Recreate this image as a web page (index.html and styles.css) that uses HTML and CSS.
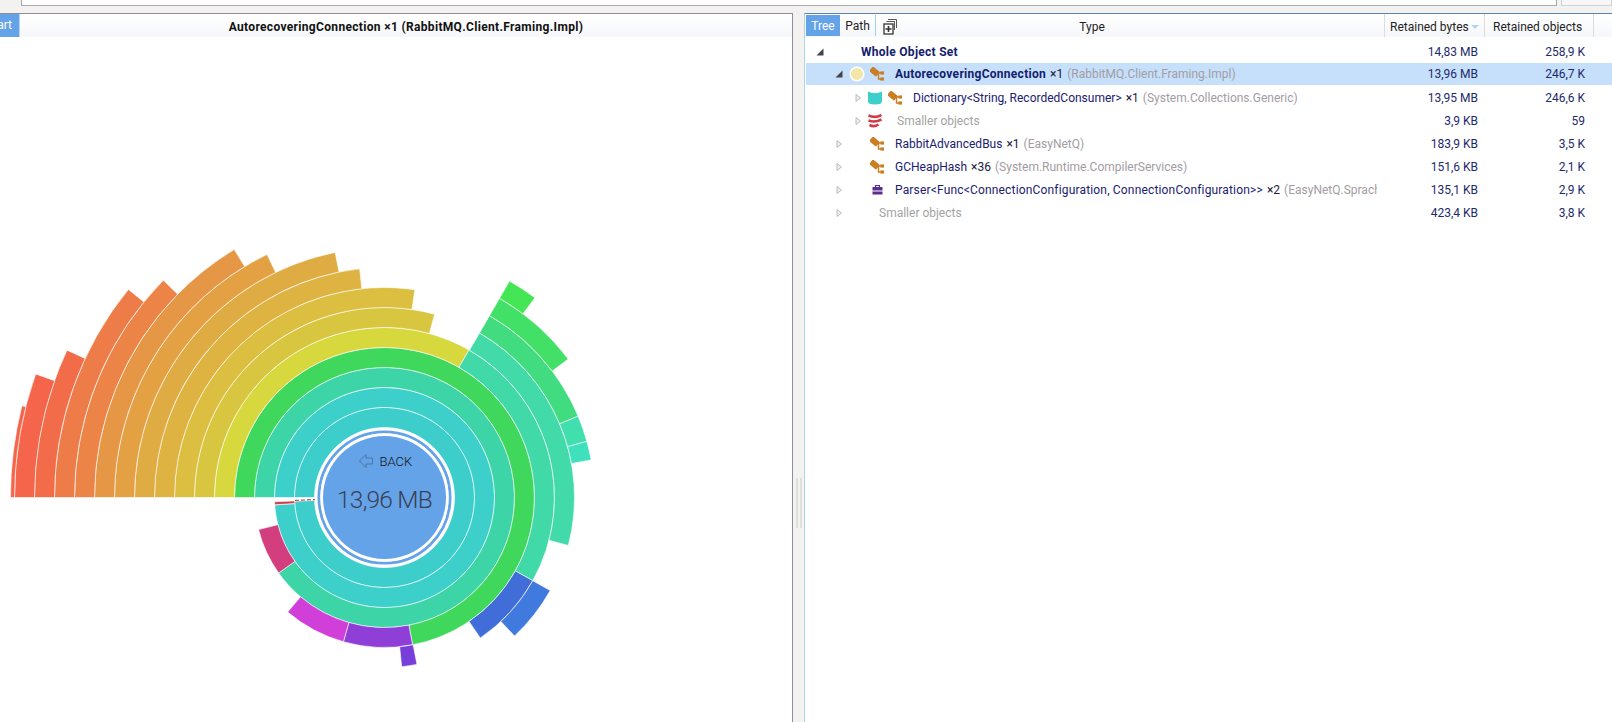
FILE: index.html
```
<!DOCTYPE html>
<html lang="en">
<head>
<meta charset="utf-8">
<title>Whole Object Set</title>
<link rel="stylesheet" href="styles.css">
</head>
<body>
<div class="topbar">
  <div class="search"></div>
  <div class="search-side"></div>
</div>
<div class="main">
  <section class="left">
    <header class="left-head">
      <div class="start"><span>Start</span></div>
      <div class="title">AutorecoveringConnection ×1 (RabbitMQ.Client.Framing.Impl)</div>
    </header>
    <svg id="sunburst" class="chart" viewBox="0 37 792 685" width="792" height="685">
      <g id="arcs"></g>
      <line class="dash" x1="295" y1="500.4" x2="315" y2="499.6"></line>
      <circle class="core-ring" cx="384.5" cy="497.5" r="68.2"></circle>
      <circle class="core-mid" cx="384.5" cy="497.5" r="65.5"></circle>
      <circle class="core-ring" cx="384.5" cy="497.5" r="62.7"></circle>
      <circle class="core" cx="384.5" cy="497.5" r="61.5"></circle>
      <path class="back-arrow" d="M359.5 461 L366 454.5 V458 H372.5 V464 H366 V467.5 Z"></path>
      <text class="back" x="379.5" y="465.5">BACK</text>
      <text class="size" x="384.5" y="508" text-anchor="middle">13,96 MB</text>
    </svg>
  </section>
  <div class="splitter"><div class="grip"></div></div>
  <section class="right">
    <header class="right-head">
      <div class="tab active">Tree</div>
      <div class="tab">Path</div>
      <div class="tool">
        <svg width="14" height="16" viewBox="0 0 14 16">
          <path class="i-stack" d="M5 .5H13.5V9M3.5 2.5H11.5V11M1.5 4.5"></path>
          <rect class="i-box" x="1" y="5" width="9" height="10"></rect>
          <path class="i-plus" d="M5.5 7V13M2.5 10H8.5"></path>
        </svg>
      </div>
      <div class="col-type">Type</div>
      <div class="col-bytes">Retained bytes<i class="sort"></i></div>
      <div class="col-objs">Retained objects</div>
    </header>
    <div class="rows">
      <div class="row lv0">
        <div class="tree">
          <svg class="exp" viewBox="0 0 12 12"><path class="open" d="M9.5 2.5V9.5H2.5Z"></path></svg>
          <span class="name root gap-35">Whole Object Set</span>
        </div>
        <div class="n1">14,83 MB</div><div class="n2">258,9 K</div>
      </div>
      <div class="row lv1 sel">
        <div class="tree">
          <svg class="exp" viewBox="0 0 12 12"><path class="open" d="M9.5 2.5V9.5H2.5Z"></path></svg>
          <svg class="mark" viewBox="0 0 16 16"><circle class="dot" cx="8" cy="8" r="6.8"></circle></svg>
          <svg class="ico gap-5" viewBox="0 0 14 14"><use href="#cls"></use></svg>
          <span class="name bold gap-11">AutorecoveringConnection</span><span class="cnt">×1</span><span class="ns">(RabbitMQ.Client.Framing.Impl)</span>
        </div>
        <div class="n1">13,96 MB</div><div class="n2">246,7 K</div>
      </div>
      <div class="row lv2">
        <div class="tree">
          <svg class="exp" viewBox="0 0 12 12"><path class="shut" d="M4 2.5L8.5 6L4 9.5Z"></path></svg>
          <svg class="ico gap-4" viewBox="0 0 14 14"><path class="cyl" d="M0 .5Q7 4 14 .5V10.5Q14 13.5 7 13.5Q0 13.5 0 10.5Z"></path></svg>
          <svg class="ico gap-6" viewBox="0 0 14 14"><use href="#cls"></use></svg>
          <span class="name gap-11">Dictionary&lt;String, RecordedConsumer&gt;</span><span class="cnt">×1</span><span class="ns">(System.Collections.Generic)</span>
        </div>
        <div class="n1">13,95 MB</div><div class="n2">246,6 K</div>
      </div>
      <div class="row lv2">
        <div class="tree">
          <svg class="exp" viewBox="0 0 12 12"><path class="shut" d="M4 2.5L8.5 6L4 9.5Z"></path></svg>
          <svg class="ico gap-4" viewBox="0 0 14 14"><path class="swoosh" d="M.5 1.5Q7 4.5 13.5 1M.5 6.5Q7 9 13.5 5.5M1.5 11Q6 13.5 10.5 10.5"></path></svg>
          <span class="name muted gap-15">Smaller objects</span>
        </div>
        <div class="n1">3,9 KB</div><div class="n2">59</div>
      </div>
      <div class="row lv1">
        <div class="tree">
          <svg class="exp" viewBox="0 0 12 12"><path class="shut" d="M4 2.5L8.5 6L4 9.5Z"></path></svg>
          <svg class="ico gap-25" viewBox="0 0 14 14"><use href="#cls"></use></svg>
          <span class="name gap-11">RabbitAdvancedBus</span><span class="cnt">×1</span><span class="ns">(EasyNetQ)</span>
        </div>
        <div class="n1">183,9 KB</div><div class="n2">3,5 K</div>
      </div>
      <div class="row lv1">
        <div class="tree">
          <svg class="exp" viewBox="0 0 12 12"><path class="shut" d="M4 2.5L8.5 6L4 9.5Z"></path></svg>
          <svg class="ico gap-25" viewBox="0 0 14 14"><use href="#cls"></use></svg>
          <span class="name gap-11">GCHeapHash</span><span class="cnt">×36</span><span class="ns">(System.Runtime.CompilerServices)</span>
        </div>
        <div class="n1">151,6 KB</div><div class="n2">2,1 K</div>
      </div>
      <div class="row lv1">
        <div class="tree">
          <svg class="exp" viewBox="0 0 12 12"><path class="shut" d="M4 2.5L8.5 6L4 9.5Z"></path></svg>
          <svg class="ico gap-25" viewBox="0 0 14 14"><path class="bag" fill-rule="evenodd" d="M5 2H10V4H12.5V7.5H2.5V4H5ZM6.2 3V4H8.8V3ZM2.5 8.5H12.5V11.5H2.5Z"></path></svg>
          <span class="name wide gap-11">Parser&lt;Func&lt;ConnectionConfiguration, ConnectionConfiguration&gt;&gt;</span><span class="cnt">×2</span><span class="ns">(EasyNetQ.Sprache)</span>
        </div>
        <div class="n1">135,1 KB</div><div class="n2">2,9 K</div>
      </div>
      <div class="row lv1">
        <div class="tree">
          <svg class="exp" viewBox="0 0 12 12"><path class="shut" d="M4 2.5L8.5 6L4 9.5Z"></path></svg>
          <span class="name muted gap-34">Smaller objects</span>
        </div>
        <div class="n1">423,4 KB</div><div class="n2">3,8 K</div>
      </div>
    </div>
  </section>
</div>
<svg class="defs" width="0" height="0">
  <defs>
    <g id="cls">
      <path class="cls-line" d="M6 6H11M8.5 6V12H12"></path>
      <rect class="cls-a" x="0" y="1.5" width="9" height="6" rx=".8" transform="rotate(40 4.5 4.5)"></rect>
      <rect class="cls-b" x="10.4" y="4.4" width="3.6" height="3.2"></rect>
      <rect class="cls-b" x="10.4" y="10.4" width="3.6" height="3.2"></rect>
    </g>
  </defs>
</svg>
<script src="sunburst.js"></script>
</body>
</html>
```
FILE: styles.css
```
* { box-sizing: border-box; }
html, body { margin: 0; height: 722px; overflow: hidden; background: #f3f2f1; }
body { font: 12px/16px Roboto, "Noto Sans", sans-serif; color: #1a1a1a; }

.topbar { height: 13px; display: flex; padding-left: 21px; background: #f3f2f1; }
.search { width: 1537px; height: 6px; background: #fff; border: 1px solid #a9a9ad; border-top: 0; }
.search-side { width: 51px; height: 6px; margin-left: 4px; background: #f7f7f7; border: 1px solid #d2d2d2; border-top: 0; }

.main { height: 709px; display: flex; }

.left { width: 793px; background: #fff; border-top: 1px solid #8d8f98; border-right: 1px solid #8d8f98; }
.left-head { height: 23px; display: flex; background: linear-gradient(#fff, #f6f7fa); }
.start { width: 20px; background: #65a3e8; border-right: 1px solid #b9d6f3; color: #fff; overflow: hidden; display: flex; justify-content: flex-end; line-height: 23px; padding-right: 7px; }
.title { flex: 1; text-align: center; font-weight: 700; letter-spacing: .33px; line-height: 26px; color: #111; white-space: nowrap; }
.chart { display: block; }

.arc { stroke: #fff; stroke-width: .6; }
.dash { stroke: #d13c47; stroke-width: 1.2; stroke-dasharray: 4 2; }
.core-ring { fill: none; stroke: #fff; stroke-width: 3; }
.core-mid { fill: none; stroke: #65a3e8; stroke-width: 3; }
.core { fill: #65a3e8; }
.back-arrow { fill: none; stroke: #4f74a8; stroke-width: 1; }
.back { font: 300 13px Roboto, sans-serif; fill: #101418; }
.size { font: 300 24.5px Roboto, sans-serif; letter-spacing: -.8px; fill: #3b4054; }

.splitter { width: 11px; padding: 464px 0 0 3px; background: #f3f2f1; }
.grip { width: 6px; height: 50px; border-left: 2px solid #dfdfdc; border-right: 2px solid #dfdfdc; margin-top: 1px; }

.right { flex: 1; min-width: 0; background: #fff; border-top: 1px solid #5a85a8; border-left: 1px solid #a8d8ee; }
.right-head { height: 23px; display: flex; align-items: stretch; background: linear-gradient(#fff, #f6f7fa); }
.tab { margin: 1px 0; padding-top: 3px; width: 35px; text-align: center; color: #222; }
.tab:first-child { margin-left: 1px; width: 34px; }
.tab.active { background: #65a3e8; color: #fff; }
.tool { width: 25px; padding: 4px 0 0 7px; border-left: 1px solid #a8cde8; margin: 1px 0; }
.tool svg { display: block; }
.i-stack { fill: none; stroke: #555; stroke-width: 1; }
.i-box { fill: #fff; stroke: #444; stroke-width: 1.4; }
.i-plus { fill: none; stroke: #333; stroke-width: 1.6; }
.col-type { flex: 1; text-align: center; padding: 5px 100px 0 0; color: #222; }
.col-bytes { width: 100px; padding: 5px 0 0 5px; border-left: 1px solid #dcdcdc; white-space: nowrap; display: flex; color: #222; }
.col-objs { width: 110px; padding: 5px 0 0 8px; border-left: 1px solid #dcdcdc; border-right: 1px solid #dcdcdc; margin-right: 18px; white-space: nowrap; color: #222; }
.sort { width: 0; height: 0; margin: 6px 0 0 2px; border: 4px solid transparent; border-top: 4px solid #b5d3ec; border-bottom: 0; }

.rows { padding-top: 3px; }
.row { height: 23px; display: flex; align-items: center; padding-right: 27px; line-height: 22px; color: #1c2a6b; }
.lv0 .tree { padding-left: 9px; }
.lv1 .tree { padding-left: 28px; }
.lv2 .tree { padding-left: 47px; }
.sel { background: #c6e0fb; background-clip: content-box; border-bottom: 1px solid #fff; margin-left: 1px; padding-right: 0; }
.sel .n2 { margin-right: 27px; }
.sel .tree { padding-left: 27px; }
.tree { flex: 1; min-width: 0; height: 22px; display: flex; align-items: center; overflow: hidden; white-space: nowrap; }
.n1 { width: 101px; text-align: right; }
.n2 { width: 107px; text-align: right; }

.exp { width: 12px; height: 12px; flex: none; }
.open { fill: #444; }
.shut { fill: #eee; stroke: #bdbdbd; stroke-width: 1; }
.mark { width: 16px; height: 16px; flex: none; margin-left: 4px; }
.dot { fill: #f2e6a8; stroke: #fff; stroke-width: 1.4; }
.ico { width: 14px; height: 14px; flex: none; }
.gap-4 { margin-left: 4px; }
.gap-5 { margin-left: 5px; }
.gap-6 { margin-left: 6px; }
.gap-25 { margin-left: 25px; }
.gap-11 { margin-left: 11px; }
.gap-15 { margin-left: 15px; }
.gap-34 { margin-left: 34px; }
.gap-35 { margin-left: 35px; }
.cyl { fill: #3dcfcb; }
.swoosh { fill: none; stroke: #d13c47; stroke-width: 2.6; }
.bag { fill: #5c2d91; }
.cls-line { fill: none; stroke: #cb7d22; stroke-width: 1.4; }
.cls-a { fill: #cb7d22; }
.cls-b { fill: #cb7d22; }

.name { color: #1a2070; }
.wide { letter-spacing: .17px; }
.root, .bold { font-weight: 700; letter-spacing: .28px; color: #14206e; }
.muted { color: #a3a3a3; }
.cnt { margin-left: 4px; color: #1a1a3a; }
.ns { margin-left: 4px; color: #a39ca3; }
.defs { position: absolute; }
```
FILE: sunburst.js
```
(function () {
  var cx = 384.5, cy = 497.5;
  // [inner radius, outer radius, start angle, end angle (clockwise from north), colour]
  var segs = [
    [70, 90, 270, 627.6, "#3dcecc"],
    [90, 110, 270, 626.1, "#3dd0ca"],
    [90, 110, 266.2, 267.8, "#d13c47"],
    [110, 130, 270, 594.5, "#3dd4a8"],
    [110, 130, 234.5, 255.7, "#d23e7e"],
    [130, 150, 270, 529.2, "#40d85c"],
    [130, 150, 169.2, 195.9, "#8f3fd8"],
    [130, 150, 195.9, 220.2, "#d03fd8"],
    [150, 170, 270, 389.8, "#d7d83e"],
    [150, 170, 29.8, 119.3, "#41d9a7"],
    [150, 170, 119.3, 145.7, "#406dd8"],
    [150, 170, 169, 174.2, "#773ed9"],
    [170, 190, 270, 375.3, "#d9c640"],
    [170, 190, 30, 104.6, "#41daa8"],
    [170, 190, 119.3, 136.8, "#417ade"],
    [190, 210, 270, 368.3, "#dcbe41"],
    [190, 210, 30, 67.2, "#41dc7f"],
    [190, 210, 67.2, 74.5, "#41dfae"],
    [190, 210, 74.5, 79.7, "#41e0bc"],
    [210, 230, 270, 353.8, "#dfb342"],
    [210, 230, 30, 53, "#43e068"],
    [230, 250, 270, 348.6, "#dfac43"],
    [230, 250, 30, 37, "#45e655"],
    [250, 270, 270, 334.2, "#e4a144"],
    [270, 290, 270, 328.8, "#e69745"],
    [290, 310, 270, 314.5, "#ec8447"],
    [310, 330, 270, 309.1, "#ee7c48"],
    [330, 350, 270, 294.9, "#f26c4a"],
    [350, 370, 270, 289.5, "#f4654b"],
    [370, 374, 270, 284.2, "#f4654b"]
  ];
  function pt(r, deg) {
    var a = deg * Math.PI / 180;
    return (cx + r * Math.sin(a)).toFixed(2) + " " + (cy - r * Math.cos(a)).toFixed(2);
  }
  var group = document.getElementById("arcs");
  segs.forEach(function (s) {
    var large = s[3] - s[2] > 180 ? 1 : 0;
    var d = "M" + pt(s[0], s[2]) +
      "L" + pt(s[1], s[2]) +
      "A" + s[1] + " " + s[1] + " 0 " + large + " 1 " + pt(s[1], s[3]) +
      "L" + pt(s[0], s[3]) +
      "A" + s[0] + " " + s[0] + " 0 " + large + " 0 " + pt(s[0], s[2]) + "Z";
    var p = document.createElementNS("http://www.w3.org/2000/svg", "path");
    p.setAttribute("d", d);
    p.setAttribute("fill", s[4]);
    p.setAttribute("class", "arc");
    group.appendChild(p);
  });
})();
```
